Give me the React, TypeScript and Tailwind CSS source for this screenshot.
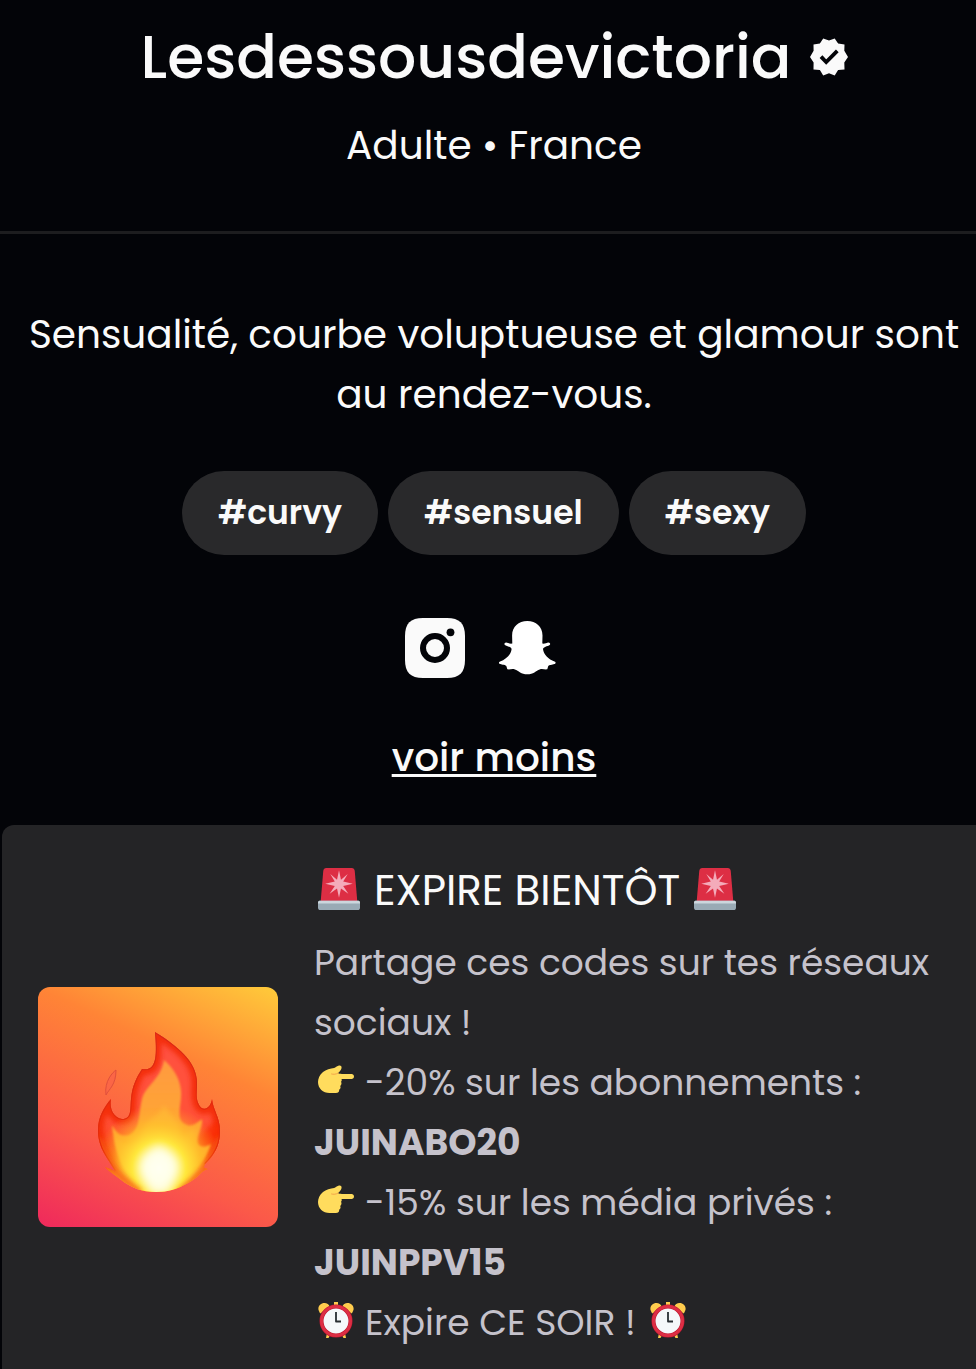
import type { ReactNode } from "react";

const tags = ["#curvy", "#sensuel", "#sexy"];

function VerifiedBadge() {
  return (
    <svg viewBox="0 0 38 38" className="h-[38px] w-[38px] shrink-0" role="img" aria-label="Vérifié">
      <path
        fill="#fafafa"
        d="M19 2.6 24.7.4l3.4 5.2 6.4.9-.2 6.2 3.7 6.3-3.7 5.6.2 6.8-6.4.6-3.4 5.4L19 35.2l-5.8 2.2-3.3-5.4-6.4-.6.1-6.8L0 19l3.6-6.3-.1-6.2 6.4-.9L13.2.4Z"
      />
      <path d="m11 18.600 5.200 5.400L27.300 12.800" fill="none" stroke="#030408" strokeWidth="3.800" />
    </svg>
  );
}

function InstagramIcon() {
  return (
    <svg viewBox="0 0 60 60" className="h-[60px] w-[60px]" aria-hidden="true">
      <path
        fill="#fafafa"
        d="M18 0h24C54.500 0 60 5.500 60 18v24C60 54.500 54.500 60 42 60H18C5.500 60 0 54.500 0 42V18C0 5.500 5.500 0 18 0Z"
      />
      <circle cx="30" cy="30" r="12" fill="none" stroke="#030408" strokeWidth="6" />
      <circle cx="45.5" cy="14.3" r="3.9" fill="#030408" />
    </svg>
  );
}

function SnapchatIcon() {
  return (
    <svg viewBox="0 0 60 60" className="h-[60px] w-[60px]" aria-hidden="true">
      <path
        fill="#ffffff"
        d="M30.300 3C39 3 45.500 8.500 45.500 17.500L45.300 25.600C47.500 26.200 49.500 24.700 51.500 24.500C53.300 24.600 53.800 26.300 52.300 27.200C50.300 28.300 46.500 28.700 46 31C46.500 36.500 51.500 41.400 57.500 43.500C59.300 44.200 58.800 45.600 57.300 46.100C55.500 46.900 51.700 46.900 51.100 48.400L50.300 51.300C48 51.800 45.500 50.600 42.700 51.400C39 52.600 36.500 56.300 30.300 56.300C24.100 56.300 21.600 52.600 17.900 51.400C15.100 50.600 12.600 51.800 10.300 51.300L9.500 48.400C8.900 46.900 5.100 46.900 3.300 46.100C1.800 45.600 1.300 44.200 3.100 43.500C9.100 41.400 14.100 36.500 14.600 31C14.100 28.700 10.300 28.300 8.300 27.200C6.800 26.300 7.300 24.600 9.100 24.500C11.100 24.700 13.100 26.200 15.300 25.600L15.100 17.500C15.100 8.500 21.600 3 30.300 3Z"
      />
    </svg>
  );
}

function Siren() {
  return (
    <svg viewBox="0 0 36 36" className="mb-1 h-[42px] w-[42px] shrink-0" role="img" aria-label="🚨">
      <path fill="#DD2E44" d="M31.500 2.500C31.300 1 30.300 0 29 0H7C5.700 0 4.700 1 4.500 2.500L2.300 29h31.400Z" />
      <path
        fill="#F4ABBA"
        d="m18 2 1.700 8 5.800-4.800-3.900 6.300 8.200 2.100-8.200 1.800 4.400 6.700-6.300-4.500L18 25.500l-1.700-7.900-6.300 4.500 4.400-6.700-8.200-1.800 8.200-2.100-3.900-6.300 5.800 4.800Z"
      />
      <path fill="#99AAB5" d="M0 29.500C0 28.500.8 28 2 28h32c1.200 0 2 .5 2 1.500V34c0 1.200-.8 2-2 2H2c-1.200 0-2-.8-2-2Z" />
      <path fill="#CCD6DD" d="M0 29.500C0 28.500.8 28 2 28h32c1.200 0 2 .5 2 1.500v1H0Z" />
    </svg>
  );
}

function PointingHand() {
  return (
    <svg
      viewBox="0 0 36 36"
      className="mr-[11px] inline-block h-9 w-9 align-[-3px]"
      role="img"
      aria-label="👉"
    >
      <path
        fill="#FFDC5D"
        d="M33.500 12H24c-2 0-3.300-.2-3.900-.9 1.600-1.300 3-3 3.400-4.800.5-2-.8-3.100-2.500-2.700-2 .6-2.600 1.500-4.800 2.400C12.500 6.700 7.900 7.500 5 10c-3.400 3-5 6.500-5 10 0 6.500 5 11 11.500 11h6.200c2.800 0 3.800-1.500 3.400-3.200 1.500-.9 1.800-2.400 1.100-3.800 1.500-1.200 1.600-3 .8-4.200.8-.8 1-2 .5-2.800h10c1.600 0 2.500-1 2.500-2.500S35 12 33.500 12Z"
      />
      <path
        d="M20.100 11.100c-2.500 1.500-4.800 1.300-6.500.9"
        fill="none"
        stroke="#EF9645"
        strokeWidth=".8"
        strokeLinecap="round"
      />
    </svg>
  );
}

function AlarmClock({ className }: { className: string }) {
  return (
    <svg viewBox="0 0 36 36" className={className} role="img" aria-label="⏰">
      <path fill="#FFCC4D" d="M16 0h4v5h-4ZM9 31l3 2-1.500 3H8ZM27 31l-3 2 1.500 3H28Z" />
      <path fill="#FFCC4D" d="M1 9C-1 5.500 2 1 6.500 1 9 1 11 2.600 11.500 4.200L2.500 11.500C1.800 11 1.300 9.900 1 9ZM35 9c2-3.500-1-8-5.500-8-2.500 0-4.500 1.600-5 3.200l9 7.300c.7-.5 1.200-1.600 1.500-2.500Z" />
      <circle cx="18" cy="19" r="14.500" fill="#F5F8FA" stroke="#BE1931" strokeWidth="4" />
      <circle cx="18" cy="19" r="14.500" fill="none" stroke="#DD2E44" strokeWidth="3" />
      <path d="M18 10v9.500h5" fill="none" stroke="#292F33" strokeWidth="1.800" strokeLinejoin="round" />
    </svg>
  );
}

function FlameImage() {
  return (
    <svg viewBox="0 0 240 240" className="h-60 w-60 shrink-0 rounded-xl" role="img" aria-label="Flamme">
      <defs>
        <linearGradient id="backdrop" gradientUnits="userSpaceOnUse" x1="53" y1="264" x2="187" y2="-24">
          <stop offset="0" stopColor="#ef295c" />
          <stop offset=".32" stopColor="#fb5949" />
          <stop offset=".68" stopColor="#ff8436" />
          <stop offset="1" stopColor="#ffcb3a" />
        </linearGradient>
        <linearGradient id="outer" gradientUnits="userSpaceOnUse" x1="120" y1="45" x2="120" y2="205">
          <stop offset="0" stopColor="#ff5142" />
          <stop offset=".55" stopColor="#ff5137" />
          <stop offset=".78" stopColor="#fd4611" />
          <stop offset="1" stopColor="#ff8b2c" />
        </linearGradient>
        <linearGradient id="rim" gradientUnits="userSpaceOnUse" x1="120" y1="45" x2="120" y2="200">
          <stop offset="0" stopColor="#d62a17" />
          <stop offset=".75" stopColor="#e72b08" />
          <stop offset="1" stopColor="#f36a20" stopOpacity="0" />
        </linearGradient>
        <linearGradient id="inner" gradientUnits="userSpaceOnUse" x1="120" y1="73" x2="120" y2="200">
          <stop offset="0" stopColor="#ff9a40" />
          <stop offset=".45" stopColor="#ffa535" />
          <stop offset="1" stopColor="#ffb41e" />
        </linearGradient>
        <radialGradient id="glow" gradientUnits="userSpaceOnUse" cx="121" cy="181" r="64">
          <stop offset="0" stopColor="#fffff0" />
          <stop offset=".2" stopColor="#fffbb2" />
          <stop offset=".42" stopColor="#ffe83b" />
          <stop offset=".68" stopColor="#ffc12b" stopOpacity=".65" />
          <stop offset="1" stopColor="#ffa12c" stopOpacity="0" />
        </radialGradient>
        <filter id="soft" x="-20%" y="-20%" width="140%" height="140%">
          <feGaussianBlur stdDeviation="1" />
        </filter>
        <filter id="edge" x="-20%" y="-20%" width="140%" height="140%">
          <feGaussianBlur stdDeviation="2.500" />
        </filter>
        <filter id="core" x="-60%" y="-60%" width="220%" height="220%">
          <feGaussianBlur stdDeviation="5" />
        </filter>
        <clipPath id="flame">
          <path d="M117 45C128 52 154 68 158 88C161 100 156 109 161 118C166 126 173 120 174 112C175 123 182 130 182 144C182 159 176 168 167 177C165 181 166 181 170 182C162 184 162 190 150 196C140 202 130 205 118 205C104 205 93 201 82 192C77 188 70 184 67 180L77 184C70 171 60 162 60 143C60 130 66 120 73 112C71 122 76 131 84 132C94 132 92 122 93 112C94 100 98 91 104 82C119 85 119 68 117 45Z" />
        </clipPath>
      </defs>
      <rect width="240" height="240" fill="url(#backdrop)" />
      <path d="M78 83C75 85 66 94 68 108C71 102 78 98 78 83Z" fill="#fb6646" stroke="#e0503c" strokeWidth="1" />
      <g clipPath="url(#flame)">
        <rect x="55" y="40" width="135" height="170" fill="url(#outer)" />
        <path
          d="M117 45C128 52 154 68 158 88C161 100 156 109 161 118C166 126 173 120 174 112C175 123 182 130 182 144C182 159 176 168 167 177M77 184C70 171 60 162 60 143C60 130 66 120 73 112C71 122 76 131 84 132C94 132 92 122 93 112C94 100 98 91 104 82C119 85 119 68 117 45"
          fill="none"
          stroke="#f12706"
          strokeWidth="11"
          opacity=".8"
          filter="url(#edge)"
        />
        <path d="M182 132C172 138 160 148 160 158C165 164 176 158 182 150Z" fill="#f92c05" opacity=".7" filter="url(#edge)" />
        <path
          d="M126 73C134 80 142 90 143 104C144 118 137 132 147 137C153 141 159 136 164 132C165 141 157 151 160 157C163 162 170 159 173 157C166 178 148 202 120 205C91 202 77 173 74 138C79 147 84 150 91 148C103 142 100 128 104 112C108 98 123 92 126 73Z"
          fill="url(#inner)"
          filter="url(#soft)"
        />
        <path d="M126 118C133 132 143 132 144 153C147 145 152 145 158 142C154 163 166 173 149 190L122 205L90 189C80 177 81 163 76 149C91 164 103 158 104 148C105 132 122 132 126 118Z" fill="#ffd13c" opacity=".45" filter="url(#edge)" />
        <circle cx="121" cy="181" r="64" fill="url(#glow)" />
        <path d="M60 151C66 177 82 190 102 206M182 151C178 174 160 191 141 206" fill="none" stroke="#f85a18" strokeWidth="7" opacity=".8" filter="url(#edge)" />
        <path d="M121 158C132 164 143 174 139 185L130 207H113L103 185C99 174 110 164 121 158Z" fill="#fffff3" opacity=".85" filter="url(#core)" />
        <path
          d="M117 45C128 52 154 68 158 88C161 100 156 109 161 118C166 126 173 120 174 112C175 123 182 130 182 144C182 159 176 168 167 177M77 184C70 171 60 162 60 143C60 130 66 120 73 112C71 122 76 131 84 132C94 132 92 122 93 112C94 100 98 91 104 82C119 85 119 68 117 45"
          fill="none"
          stroke="url(#rim)"
          strokeWidth="2"
        />
      </g>
    </svg>
  );
}

function Code({ children }: { children: ReactNode }) {
  return <strong className="block font-bold">{children}</strong>;
}

export default function App() {
  return (
    <div className="min-h-screen overflow-x-hidden bg-[#030408] font-['Poppins',Inter,sans-serif] text-[#fafafa]">
      <header className="flex flex-col items-center border-b-3 border-[#1d1d1f] pt-3 pb-[55px] pl-3 text-center">
        <div className="flex items-center gap-[18px]">
          <h1 className="text-[60px] leading-[90px] font-medium">Lesdessousdevictoria</h1>
          <VerifiedBadge />
        </div>
        <p className="mt-[14px] text-[39px] leading-[60px]">Adulte • France</p>
      </header>

      <main>
        <section className="flex flex-col items-center pt-[71px] pl-3 text-center">
          <p className="px-3 text-[39px] leading-[60px]">
            Sensualité, courbe voluptueuse et glamour sont au rendez-vous.
          </p>

          <ul className="mt-[46px] flex gap-[10px]">
            {tags.map((tag) => (
              <li key={tag} className="rounded-full bg-[#29292b] px-9 text-[33px] leading-[84px] font-semibold">
                {tag}
              </li>
            ))}
          </ul>

          <div className="mt-[63px] flex gap-8 pr-[26px]">
            <a href="#instagram" aria-label="Instagram">
              <InstagramIcon />
            </a>
            <a href="#snapchat" aria-label="Snapchat">
              <SnapchatIcon />
            </a>
          </div>

          <button
            type="button"
            className="mt-[50px] text-[39px] leading-[60px] font-medium underline decoration-3 underline-offset-3"
          >
            voir moins
          </button>
        </section>

        <section className="mt-[37px] ml-[2px] flex items-center gap-9 rounded-tl-xl bg-[#242426] py-9 pl-9">
          <FlameImage />
          <div className="min-w-0 flex-1 pr-4">
            <h2 className="flex items-center gap-[14px] pl-1 text-[42px] leading-[60px]">
              <Siren />
              EXPIRE BIENTÔT
              <Siren />
            </h2>
            <div className="mt-3 text-[36px] leading-[60px] text-[#c5c2cb]">
              <p>Partage ces codes sur tes réseaux sociaux !</p>
              <p className="pl-1">
                <PointingHand />
                -20% sur les abonnements :
              </p>
              <Code>JUINABO20</Code>
              <p className="pl-1">
                <PointingHand />
                -15% sur les média privés :
              </p>
              <Code>JUINPPV15</Code>
              <p className="pl-1">
                <AlarmClock className="mr-[11px] inline-block h-9 w-9 align-[-3px]" />
                Expire CE SOIR !
                <AlarmClock className="ml-[14px] inline-block h-9 w-9 align-[-3px]" />
              </p>
            </div>
          </div>
        </section>
      </main>
    </div>
  );
}
